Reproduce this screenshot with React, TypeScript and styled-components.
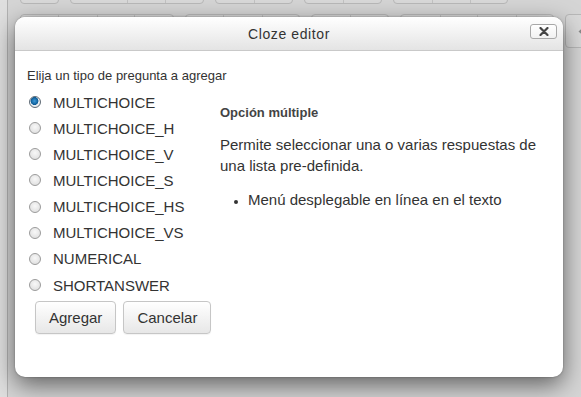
import React from "react";
import styled, { createGlobalStyle } from "styled-components";

const GlobalStyle = createGlobalStyle`
  html, body { margin: 0; padding: 0; }
  body { background: #d7d7d7; font-family: "Liberation Sans", Arial, sans-serif; }
`;

const Page = styled.div`
  position: relative;
  width: 581px;
  height: 397px;
  overflow: hidden;
  display: flex;
  background: #d5d5d5;
`;

const LeftRail = styled.div`
  width: 7px;
  flex: none;
  background: #dfdfdf;
  border-right: 1px solid #b2b2b2;
`;

const EditorArea = styled.div`
  flex: 1;
  display: flex;
  flex-direction: column;
  gap: 10px;
  padding-left: 12px;
  margin-top: -20px;
`;

const ToolRow = styled.div`
  display: flex;
  gap: 11px;
  align-items: flex-start;
`;

const Group = styled.div<{ $h: number }>`
  display: flex;
  box-sizing: border-box;
  height: ${(p) => p.$h}px;
  border: 1px solid #b8b8b8;
  border-radius: 4px;
  background: #d9d9d9;
  flex: none;
`;

const Slot = styled.div<{ $w: number }>`
  width: ${(p) => p.$w}px;
  height: 100%;
  display: flex;
  align-items: center;
  padding-left: 12px;
  box-sizing: border-box;
  & + & { border-left: 1px solid #c2c2c2; }
`;

const Dialog = styled.div`
  position: absolute;
  left: 15px;
  top: 17px;
  width: 548px;
  height: 360px;
  background: #fff;
  border-radius: 10px;
  box-shadow: 0 8px 24px rgba(0, 0, 0, 0.55), 0 0 2px rgba(0, 0, 0, 0.35);
  display: flex;
  flex-direction: column;
  overflow: hidden;
`;

const Header = styled.div`
  position: relative;
  height: 33px;
  flex: none;
  background: linear-gradient(#ffffff, #e4e4e4);
  border-bottom: 1px solid #c9c9c9;
  display: flex;
  align-items: center;
  justify-content: center;
`;

const Title = styled.h1`
  margin: 0;
  font-size: 14px;
  font-weight: normal;
  color: #333;
  letter-spacing: 0.6px;
`;

const CloseButton = styled.button`
  position: absolute;
  right: 6px;
  top: 7px;
  width: 27px;
  height: 15px;
  padding: 0;
  border: 1px solid #a8a8a8;
  border-radius: 3px;
  background: linear-gradient(#ffffff, #f1f1f1);
  display: flex;
  align-items: center;
  justify-content: center;
`;

const Body = styled.div`
  padding: 17px 12px 0 12px;
  display: flex;
  flex-direction: column;
  color: #333;
`;

const Prompt = styled.div`
  font-size: 13px;
  line-height: 16px;
`;

const Columns = styled.div`
  display: flex;
  margin-top: 5px;
`;

const LeftCol = styled.div`
  width: 193px;
  flex: none;
`;

const RadioList = styled.div`
  display: flex;
  flex-direction: column;
`;

const RadioRow = styled.label`
  display: flex;
  align-items: center;
  height: 26.15px;
  font-size: 15px;
  color: #333;
`;

const Radio = styled.input`
  appearance: none;
  margin: 0 12px 0 2px;
  width: 12px;
  height: 12px;
  border-radius: 50%;
  border: 1px solid #9b9b9b;
  background: radial-gradient(circle at 50% 40%, #f8f8f8 0%, #dadada 100%);
  box-sizing: border-box;
  &:checked {
    background: radial-gradient(circle at 45% 40%, #3d9ad8 0%, #0c5b96 45%, #eef2f5 52%, #d8d8d8 100%);
    border-color: #5f6b76;
  }
`;

const ButtonRow = styled.div`
  display: flex;
  gap: 7px;
  margin: 3px 0 0 8px;
`;

const Button = styled.button`
  height: 33px;
  padding: 0 13px;
  font-family: "Liberation Sans", Arial, sans-serif;
  font-size: 15px;
  color: #333;
  border: 1px solid #c6c6c6;
  border-radius: 4px;
  background: linear-gradient(#ffffff, #e7e7e7);
  box-shadow: 0 1px 1px rgba(0, 0, 0, 0.05);
`;

const Description = styled.div`
  padding-top: 16px;
  flex: 1;
`;

const DescTitle = styled.div`
  font-size: 13px;
  font-weight: bold;
  color: #444;
  line-height: 16px;
`;

const DescText = styled.p`
  margin: 13px 0 0 0;
  font-size: 15px;
  line-height: 21px;
  color: #333;
`;

const Bullets = styled.ul`
  margin: 13px 0 0 0;
  padding-left: 28px;
  font-size: 15px;
  line-height: 21px;
  li::marker { font-size: 12px; }
`;

const options = [
  "MULTICHOICE",
  "MULTICHOICE_H",
  "MULTICHOICE_V",
  "MULTICHOICE_S",
  "MULTICHOICE_HS",
  "MULTICHOICE_VS",
  "NUMERICAL",
  "SHORTANSWER",
];

const row1 = [[37], [56, 38, 38], [38, 38], [38, 38], [38, 38, 37]];
const row2 = [[37, 39, 37, 39], [37, 39, 37], [38, 38], [39, 37, 39, 37], [40]];

export default function App() {
  const [sel, setSel] = React.useState(0);
  return (
    <>
      <GlobalStyle />
      <Page>
        <LeftRail />
        <EditorArea>
          <ToolRow>
            {row1.map((g, i) => (
              <Group key={i} $h={24}>
                {g.map((w, j) => (
                  <Slot key={j} $w={w} />
                ))}
              </Group>
            ))}
          </ToolRow>
          <ToolRow>
            {row2.map((g, i) => (
              <Group key={i} $h={34}>
                {g.map((w, j) => (
                  <Slot key={j} $w={w}>
                    {i === 4 && (
                      <svg width="12" height="11" viewBox="0 0 12 11">
                        <path d="M0.5 5.5 L5.5 1 V3.8 H11.5 V7.2 H5.5 V10 Z" fill="#8a8a8a" />
                      </svg>
                    )}
                  </Slot>
                ))}
              </Group>
            ))}
          </ToolRow>
        </EditorArea>
        <Dialog>
          <Header>
            <Title>Cloze editor</Title>
            <CloseButton aria-label="Cerrar">
              <svg width="10" height="9" viewBox="0 0 10 9">
                <path d="M1.5 1 L8.5 8 M8.5 1 L1.5 8" stroke="#444" strokeWidth="2.2" strokeLinecap="round" />
              </svg>
            </CloseButton>
          </Header>
          <Body>
            <Prompt>Elija un tipo de pregunta a agregar</Prompt>
            <Columns>
              <LeftCol>
                <RadioList>
                  {options.map((o, i) => (
                    <RadioRow key={o}>
                      <Radio type="radio" name="qtype" checked={sel === i} onChange={() => setSel(i)} />
                      {o}
                    </RadioRow>
                  ))}
                </RadioList>
                <ButtonRow>
                  <Button>Agregar</Button>
                  <Button>Cancelar</Button>
                </ButtonRow>
              </LeftCol>
              <Description>
                <DescTitle>Opción múltiple</DescTitle>
                <DescText>
                  Permite seleccionar una o varias respuestas de una lista pre-definida.
                </DescText>
                <Bullets>
                  <li>Menú desplegable en línea en el texto</li>
                </Bullets>
              </Description>
            </Columns>
          </Body>
        </Dialog>
      </Page>
    </>
  );
}
